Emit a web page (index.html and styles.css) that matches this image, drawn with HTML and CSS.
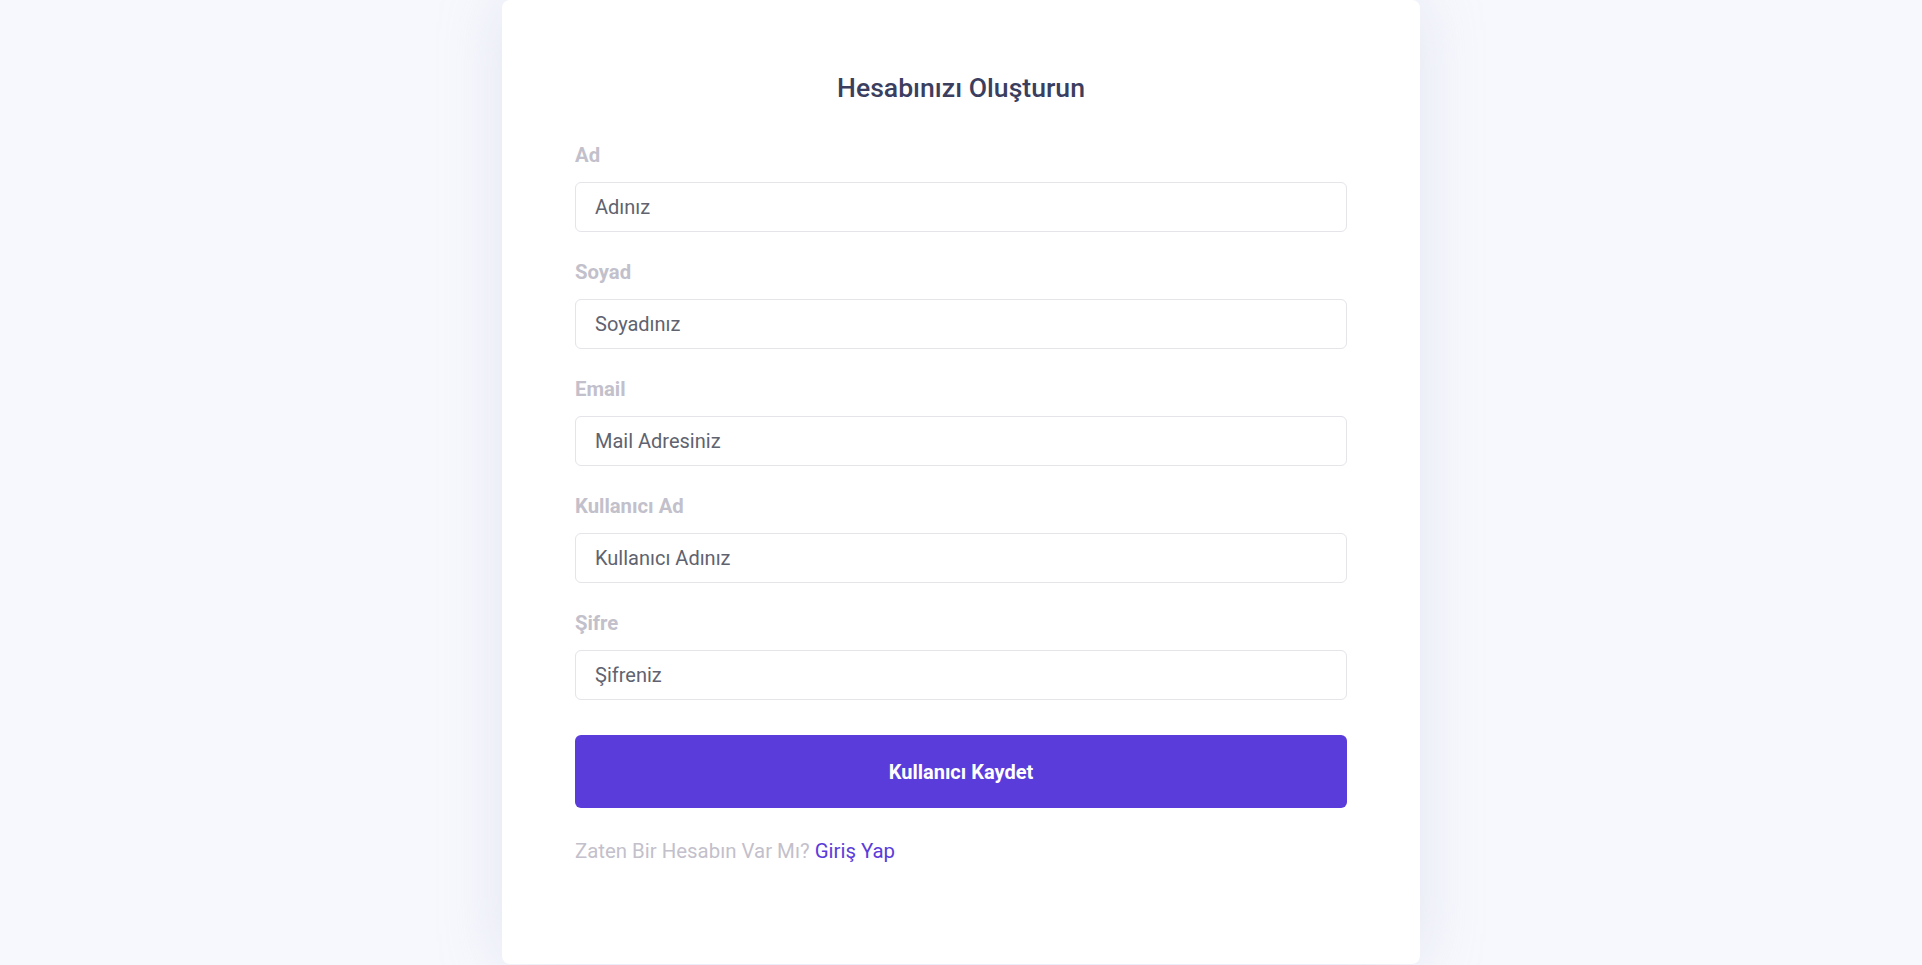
FILE: index.html
```html
<!DOCTYPE html>
<html lang="tr">
<head>
<meta charset="utf-8">
<title>Hesabınızı Oluşturun</title>
<link rel="stylesheet" href="styles.css">
</head>
<body>
<main class="page">
  <form class="card">
    <h1 class="title">Hesabınızı Oluşturun</h1>
    <div class="field">
      <label class="label" for="ad">Ad</label>
      <div class="input" id="ad">Adınız</div>
    </div>
    <div class="field">
      <label class="label" for="soyad">Soyad</label>
      <div class="input" id="soyad">Soyadınız</div>
    </div>
    <div class="field">
      <label class="label" for="email">Email</label>
      <div class="input" id="email">Mail Adresiniz</div>
    </div>
    <div class="field">
      <label class="label" for="kadi">Kullanıcı Ad</label>
      <div class="input" id="kadi">Kullanıcı Adınız</div>
    </div>
    <div class="field">
      <label class="label" for="sifre">Şifre</label>
      <div class="input" id="sifre">Şifreniz</div>
    </div>
    <button class="submit" type="button">Kullanıcı Kaydet</button>
    <p class="footer">Zaten Bir Hesabın Var Mı? <a class="link" href="#">Giriş Yap</a></p>
  </form>
</main>
</body>
</html>
```
FILE: styles.css
```css
* { box-sizing: border-box; }
html, body {
  margin: 0;
  padding: 0;
  background: #f7f8fd;
  font-family: Roboto, "Liberation Sans", sans-serif;
}
.page {
  display: flex;
  justify-content: center;
  min-height: 965px;
}
.card {
  width: 918px;
  height: 964px;
  background: #ffffff;
  border-radius: 8px;
  box-shadow: 0 0 60px rgba(190, 195, 220, 0.35);
  padding: 72px 73px 0;
  display: flex;
  flex-direction: column;
}
.title {
  margin: 0 0 39px;
  font-size: 26.6px;
  line-height: 32px;
  font-weight: 500;
  color: #3b3e5e;
  text-align: center;
}
.field {
  display: flex;
  flex-direction: column;
  gap: 15px;
  margin-bottom: 28px;
}
.field:nth-of-type(5) { margin-bottom: 35px; }
.label {
  font-size: 20.3px;
  line-height: 24px;
  font-weight: 700;
  color: #c2c0cb;
}
.input {
  height: 50px;
  border: 1px solid #e4e4e9;
  border-radius: 6px;
  padding: 0 19px;
  display: flex;
  align-items: center;
  font-size: 20px;
  color: #60636f;
}
.submit {
  height: 73px;
  border: none;
  border-radius: 6px;
  background: #5a3cda;
  color: #ffffff;
  font-family: Roboto, "Liberation Sans", sans-serif;
  font-size: 20px;
  font-weight: 700;
  cursor: pointer;
}
.footer {
  margin: 31px 0 0;
  font-size: 20.4px;
  line-height: 24px;
  color: #c3c0cb;
}
.link {
  color: #5a3cda;
  text-decoration: none;
}
```
